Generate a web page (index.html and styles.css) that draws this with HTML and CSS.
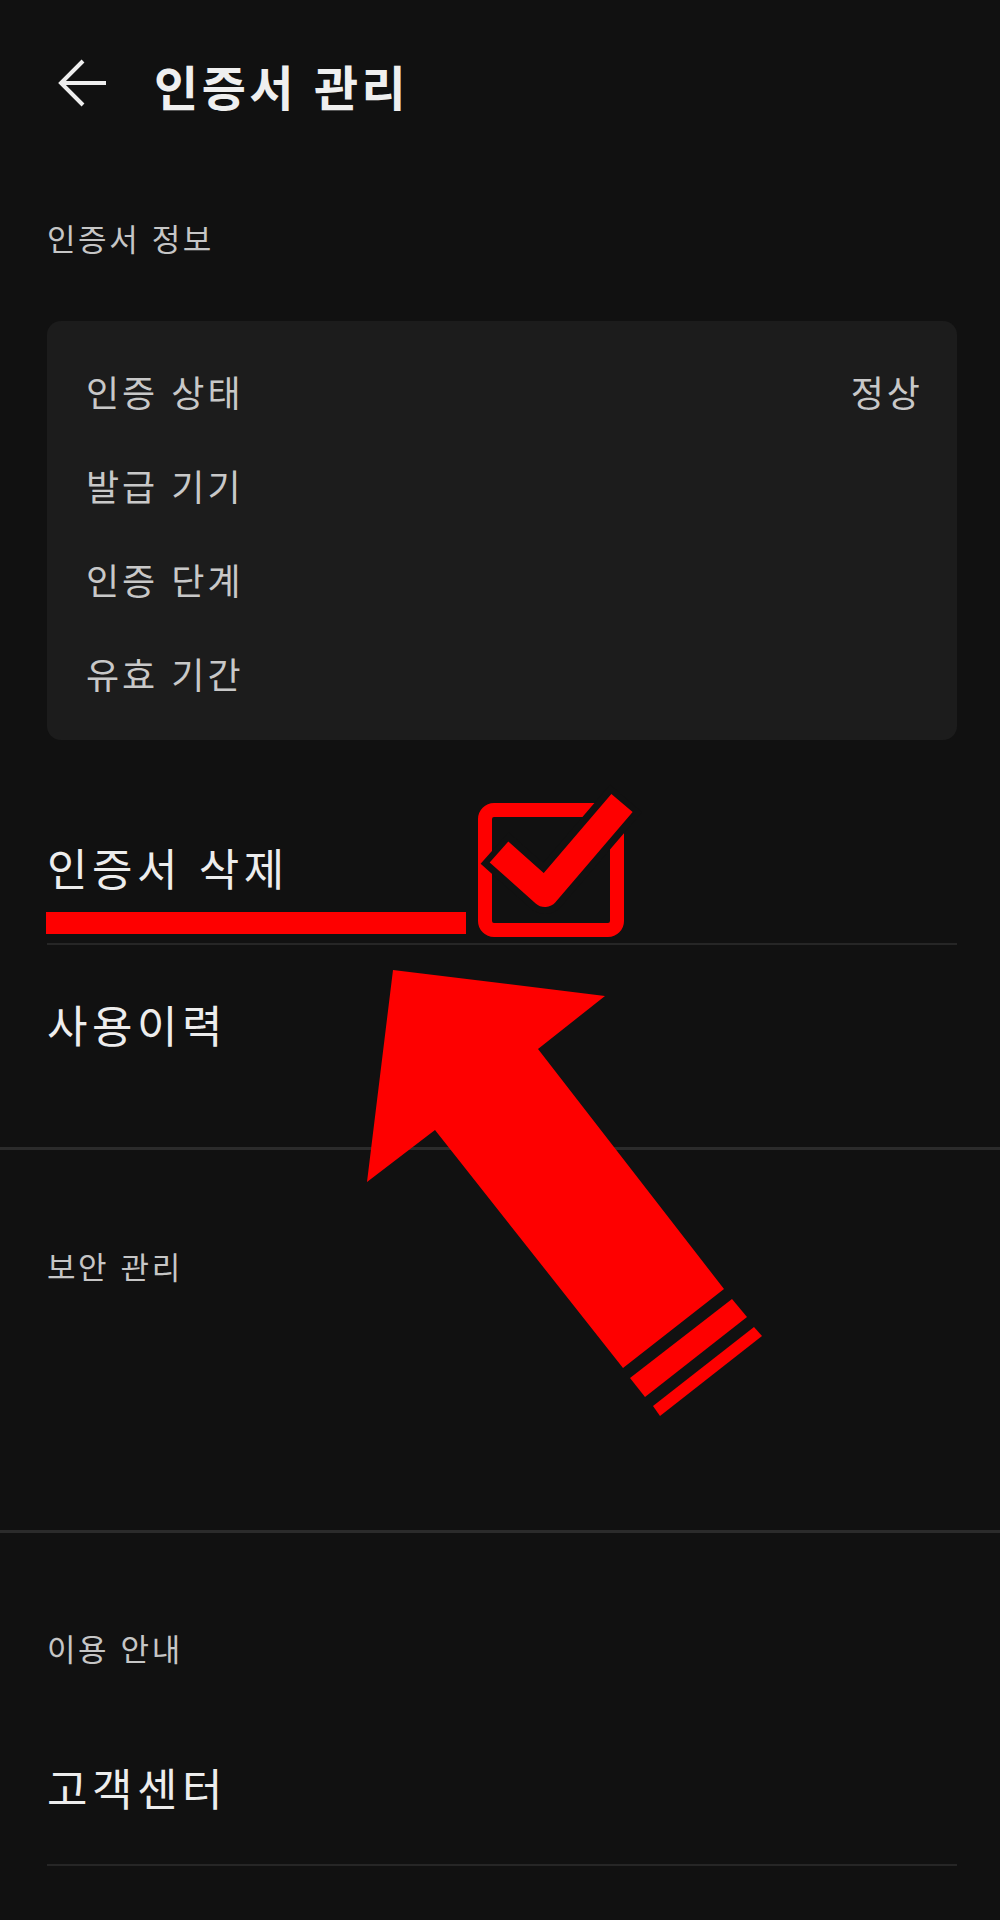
FILE: index.html
```html
<!DOCTYPE html>
<html lang="ko">

<head>
    <meta charset="UTF-8">
    <title>인증서 관리</title>
    <link rel="stylesheet" href="styles.css">
</head>

<body>
    <header class="topbar">
        <svg class="back" width="50" height="48" viewBox="0 0 50 48">
            <path d="M49 24 H4 M26 2 L4 24 L26 46" fill="none" stroke="#eeeeee" stroke-width="4" />
        </svg>
        <h1 class="title">인증서 관리</h1>
    </header>

    <main>
        <section class="group first">
            <p class="label">인증서 정보</p>

            <div class="card">
                <div class="row"><span>인증 상태</span><span class="value">정상</span></div>
                <div class="row"><span>발급 기기</span></div>
                <div class="row"><span>인증 단계</span></div>
                <div class="row"><span>유효 기간</span></div>
            </div>

            <ul class="menu">
                <li class="item line">인증서 삭제</li>
                <li class="item last">사용이력</li>
            </ul>
        </section>

        <section class="group security">
            <p class="label">보안 관리</p>
        </section>

        <section class="group info">
            <p class="label">이용 안내</p>
            <ul class="menu">
                <li class="item line help">고객센터</li>
            </ul>
        </section>
    </main>

    <!-- red marks drawn over the screenshot -->
    <svg class="marks" width="1000" height="1920" viewBox="0 0 1000 1920">
        <rect x="46" y="912" width="420" height="22" fill="#fe0000" />

        <rect x="485" y="810" width="132" height="120" rx="9" fill="none" stroke="#fe0000" stroke-width="14" />
        <path d="M494.6 848 L545 893 L626 798.5" fill="none" stroke="#111111" stroke-width="42" stroke-linejoin="round" />
        <path d="M499 852 L545 893 L622 803" fill="none" stroke="#fe0000" stroke-width="28" stroke-linejoin="round" />

        <polygon points="393,970 605,996 538,1049 724,1289 623,1368 435,1130 367,1182" fill="#fe0000" />
        <polygon points="732,1299 747,1317 645,1397 630,1378" fill="#fe0000" />
        <polygon points="754,1327 762,1336 660,1416 653,1406" fill="#fe0000" />
    </svg>
</body>

</html>
```

FILE: styles.css
```css
body {
    margin: 0;
    background-color: #111111;
    color: #eeeeee;
    font-family: "Noto Sans CJK KR", "Noto Sans", sans-serif;
    position: relative;
    min-height: 1920px;
}

.topbar {
    height: 176px;
    display: flex;
    align-items: center;
    padding-left: 57px;
}

.back {
    margin-bottom: 10px;
}

.title {
    margin: 0 0 6px 47px;
    font-size: 48px;
    font-weight: 700;
    line-height: 60px;
    letter-spacing: 3.5px;
    color: #efefef;
}

.group {
    border-bottom: 3px solid #2b2b2b;
}

.label {
    margin: 0 0 0 47px;
    font-size: 31px;
    line-height: 44px;
    letter-spacing: 2.6px;
    color: #c6c6c6;
}

.first {
    padding-bottom: 44px;
}

.first .label {
    margin-top: 40px;
}

.card {
    margin: 61px 43px 0 47px;
    padding: 23px 34px 20px 39px;
    background-color: #1c1c1c;
    border-radius: 14px;
}

.row {
    display: flex;
    justify-content: space-between;
    height: 94px;
    line-height: 94px;
    font-size: 36px;
    letter-spacing: 3px;
    color: #c8c8c8;
}

.menu {
    list-style: none;
    margin: 51px 43px 0 47px;
    padding: 0;
}

.item {
    font-size: 44px;
    height: 152px;
    line-height: 152px;
    letter-spacing: 4.5px;
    color: #ededed;
}

.item.line {
    border-bottom: 2px solid #262626;
}

.item.last {
    height: 158px;
    line-height: 158px;
}

.security {
    padding: 94px 0 242px;
}

.info {
    padding-top: 93px;
    border-bottom: none;
}

.info .menu {
    margin-top: 40px;
}

.help {
    height: 154px;
    line-height: 154px;
}

.marks {
    position: absolute;
    top: 0;
    left: 0;
    pointer-events: none;
}
```
